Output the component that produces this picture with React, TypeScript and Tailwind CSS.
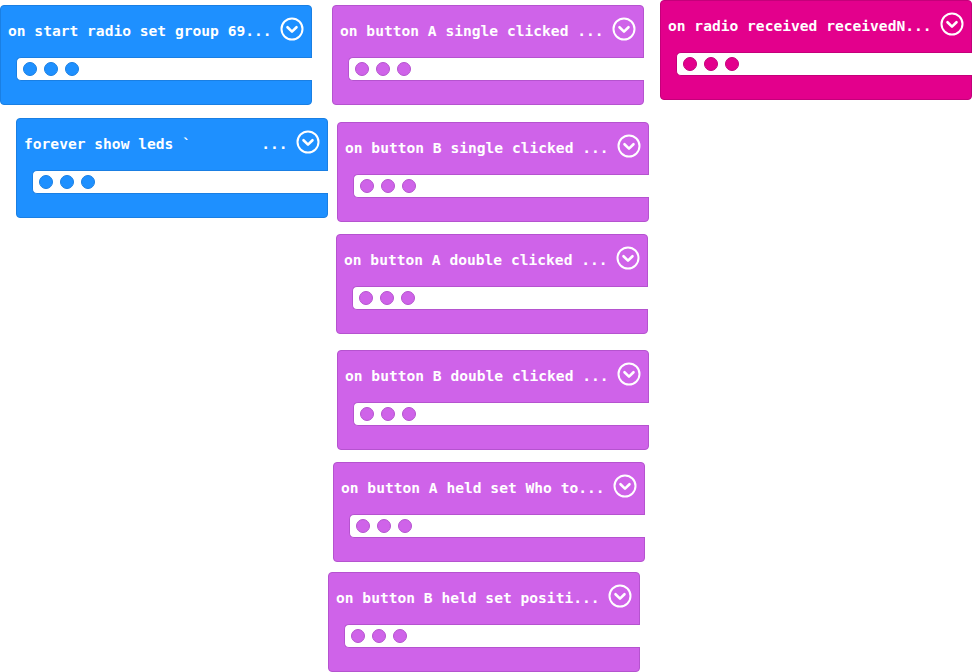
import React from "react";

type Block = {
  label: string;
  x: number;
  y: number;
  color: "blue" | "purple" | "pink";
};

const blocks: Block[] = [
  { label: "on start radio set group 69...", x: 0, y: 5, color: "blue" },
  { label: "forever show leds `        ...", x: 16, y: 118, color: "blue" },
  { label: "on button A single clicked ...", x: 332, y: 5, color: "purple" },
  { label: "on radio received receivedN...", x: 660, y: 0, color: "pink" },
  { label: "on button B single clicked ...", x: 337, y: 122, color: "purple" },
  { label: "on button A double clicked ...", x: 336, y: 234, color: "purple" },
  { label: "on button B double clicked ...", x: 337, y: 350, color: "purple" },
  { label: "on button A held set Who to...", x: 333, y: 462, color: "purple" },
  { label: "on button B held set positi...", x: 328, y: 572, color: "purple" },
];

const styles = {
  blue: {
    block: "bg-[#1e90ff] border-[#1a7fe3]",
    mouth: "border-[#1a7fe3]",
    dot: "bg-[#1e90ff] border-[#1a7fe3]",
  },
  purple: {
    block: "bg-[#cf63e9] border-[#b553cf]",
    mouth: "border-[#b553cf]",
    dot: "bg-[#cf63e9] border-[#b553cf]",
  },
  pink: {
    block: "bg-[#e3008c] border-[#c4007a]",
    mouth: "border-[#c4007a]",
    dot: "bg-[#e3008c] border-[#c4007a]",
  },
};

const Chevron = () => (
  <svg width="24" height="24" viewBox="0 0 24 24" fill="none">
    <circle cx="12" cy="12" r="10.5" stroke="white" strokeWidth="2" />
    <path
      d="M7.5 10.2 L12 14.6 L16.5 10.2"
      stroke="white"
      strokeWidth="2.6"
      strokeLinecap="round"
      strokeLinejoin="round"
    />
  </svg>
);

const CollapsedBlock = ({ label, x, y, color }: Block) => {
  const s = styles[color];
  return (
    <div
      className={`absolute flex flex-col w-[312px] h-[100px] border rounded-[4px] ${s.block}`}
      style={{ left: x, top: y }}
    >
      <div className="flex items-center justify-between h-[51px] pl-[7px] pr-[7px] pb-[5px]">
        <span className="mt-[4px] whitespace-pre text-white font-bold text-[14.6px] font-['DejaVu_Sans_Mono',monospace]">
          {label}
        </span>
        <Chevron />
      </div>
      <div
        className={`flex items-center gap-[7px] h-[24px] ml-[15px] -mr-[1px] pl-[6px] bg-white border-y border-l rounded-l-[5px] ${s.mouth}`}
      >
        <div className={`w-[14px] h-[14px] rounded-full border ${s.dot}`} />
        <div className={`w-[14px] h-[14px] rounded-full border ${s.dot}`} />
        <div className={`w-[14px] h-[14px] rounded-full border ${s.dot}`} />
      </div>
    </div>
  );
};

const App = () => {
  return (
    <div className="relative w-[972px] h-[672px] bg-white overflow-hidden">
      {blocks.map((b) => (
        <CollapsedBlock key={b.label} {...b} />
      ))}
    </div>
  );
};

export default App;
